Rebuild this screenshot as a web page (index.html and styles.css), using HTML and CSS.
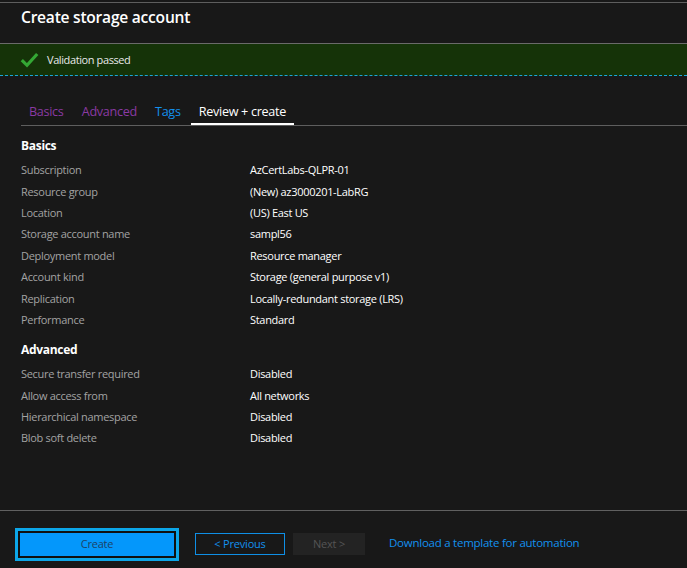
FILE: index.html
```html
<!DOCTYPE html>
<html>
<head>
<meta charset="utf-8">
<link rel="stylesheet" href="styles.css">
</head>
<body>
<div class="page">
  <header class="header">
    <h1 class="title">Create storage account</h1>
  </header>
  <div class="banner">
    <svg class="check" width="19" height="16" viewBox="0 0 19 16"><path d="M1.8 8.2 L7 13.3 L17.2 2" fill="none" stroke="#34a834" stroke-width="3.2" stroke-linecap="butt" stroke-linejoin="miter"/></svg>
    <span class="banner-text">Validation passed</span>
  </div>
  <nav class="tabs">
    <span class="tab visited">Basics</span>
    <span class="tab visited">Advanced</span>
    <span class="tab link">Tags</span>
    <span class="tab active">Review + create</span>
  </nav>
  <main class="content">
    <h2 class="section-title">Basics</h2>
    <div class="rows">
      <div class="row"><span class="label">Subscription</span><span class="value">AzCertLabs-QLPR-01</span></div>
      <div class="row"><span class="label">Resource group</span><span class="value">(New) az3000201-LabRG</span></div>
      <div class="row"><span class="label">Location</span><span class="value">(US) East US</span></div>
      <div class="row"><span class="label">Storage account name</span><span class="value">sampl56</span></div>
      <div class="row"><span class="label">Deployment model</span><span class="value">Resource manager</span></div>
      <div class="row"><span class="label">Account kind</span><span class="value">Storage (general purpose v1)</span></div>
      <div class="row"><span class="label">Replication</span><span class="value">Locally-redundant storage (LRS)</span></div>
      <div class="row"><span class="label">Performance</span><span class="value">Standard</span></div>
    </div>
    <h2 class="section-title adv">Advanced</h2>
    <div class="rows">
      <div class="row"><span class="label">Secure transfer required</span><span class="value">Disabled</span></div>
      <div class="row"><span class="label">Allow access from</span><span class="value">All networks</span></div>
      <div class="row"><span class="label">Hierarchical namespace</span><span class="value">Disabled</span></div>
      <div class="row"><span class="label">Blob soft delete</span><span class="value">Disabled</span></div>
    </div>
  </main>
  <footer class="footer">
    <div class="focus-ring"><button class="btn primary">Create</button></div>
    <button class="btn secondary">&lt; Previous</button>
    <button class="btn disabled">Next &gt;</button>
    <a class="link-text">Download a template for automation</a>
  </footer>
</div>
</body>
</html>
```

FILE: styles.css
```css
html, body {
  margin: 0;
  padding: 0;
  background: #181818;
}
body {
  font-family: "Open Sans", "Noto Sans", sans-serif;
  color: #ffffff;
  width: 687px;
  height: 568px;
  overflow: hidden;
}
.page {
  display: flex;
  flex-direction: column;
  height: 568px;
}
.header {
  margin-top: 2px;
  border-top: 1px solid #5e5e5e;
  border-bottom: 1px solid #6a6a6a;
  height: 40px;
  box-sizing: content-box;
  padding: 0 21px;
}
.title {
  margin: 0;
  padding-top: 4px;
  font-size: 15.6px;
  font-weight: 600;
  line-height: 20px;
  letter-spacing: -0.25px;
  color: #ffffff;
}
.banner {
  height: 31px;
  background: #153308;
  border-bottom: 1px dashed #1aa6dc;
  display: flex;
  align-items: center;
  padding-left: 20px;
}
.check {
  margin-right: 8px;
  margin-top: 1px;
}
.banner-text {
  font-size: 11px;
  color: #e8e8e8;
  letter-spacing: -0.4px;
}
.tabs {
  margin: 26px 0 0 21px;
  display: flex;
  border-bottom: 1px solid #5e5e5e;
  height: 23px;
}
.tab {
  font-size: 12.6px;
  letter-spacing: -0.3px;
  line-height: 19px;
  padding: 0 8px;
  margin-right: 2.2px;
  height: 21px;
}
.tab.visited { color: #8a3aa3; }
.tab.link { color: #1391ee; }
.tab.active {
  color: #ffffff;
  border-bottom: 2px solid #ffffff;
}
.content {
  padding: 0 21px;
  flex: 1;
}
.section-title {
  margin: 12px 0 5px;
  font-size: 12px;
  font-weight: 700;
  line-height: 16px;
  letter-spacing: -0.3px;
}
.section-title.adv { margin-top: 12px; margin-bottom: 5px; }
.rows {
  display: flex;
  flex-direction: column;
}
.row {
  display: grid;
  grid-template-columns: 229px 1fr;
  height: 21.4px;
  align-items: center;
  font-size: 11px;
  letter-spacing: -0.3px;
}
.label { color: #a3a3a3; }
.value { color: #ffffff; }
.footer {
  border-top: 1px solid #606060;
  height: 58px;
  display: flex;
  align-items: flex-start;
  padding: 17px 15px 0;
  box-sizing: border-box;
}
.focus-ring {
  border: 3px solid #0ca6e8;
  padding: 2px;
  background: #101010;
  display: flex;
}
.btn {
  font-family: "Open Sans", "Noto Sans", sans-serif;
  font-size: 11px;
  letter-spacing: -0.2px;
  height: 23px;
  padding: 0 0 2px;
  margin: 0;
  border: none;
}
.btn.primary {
  width: 154px;
  background: #0497fb;
  color: #1d4266;
}
.btn.secondary {
  margin: 5px 0 0 16px;
  width: 90px;
  height: 22px;
  background: transparent;
  border: 1px solid #0f8fe6;
  color: #1391ee;
}
.btn.disabled {
  margin: 5px 0 0 8px;
  width: 72px;
  height: 22px;
  background: #232323;
  color: #555555;
}
.link-text {
  margin: 7px 0 0 24px;
  font-size: 11.5px;
  letter-spacing: -0.25px;
  color: #1391ee;
}
```
